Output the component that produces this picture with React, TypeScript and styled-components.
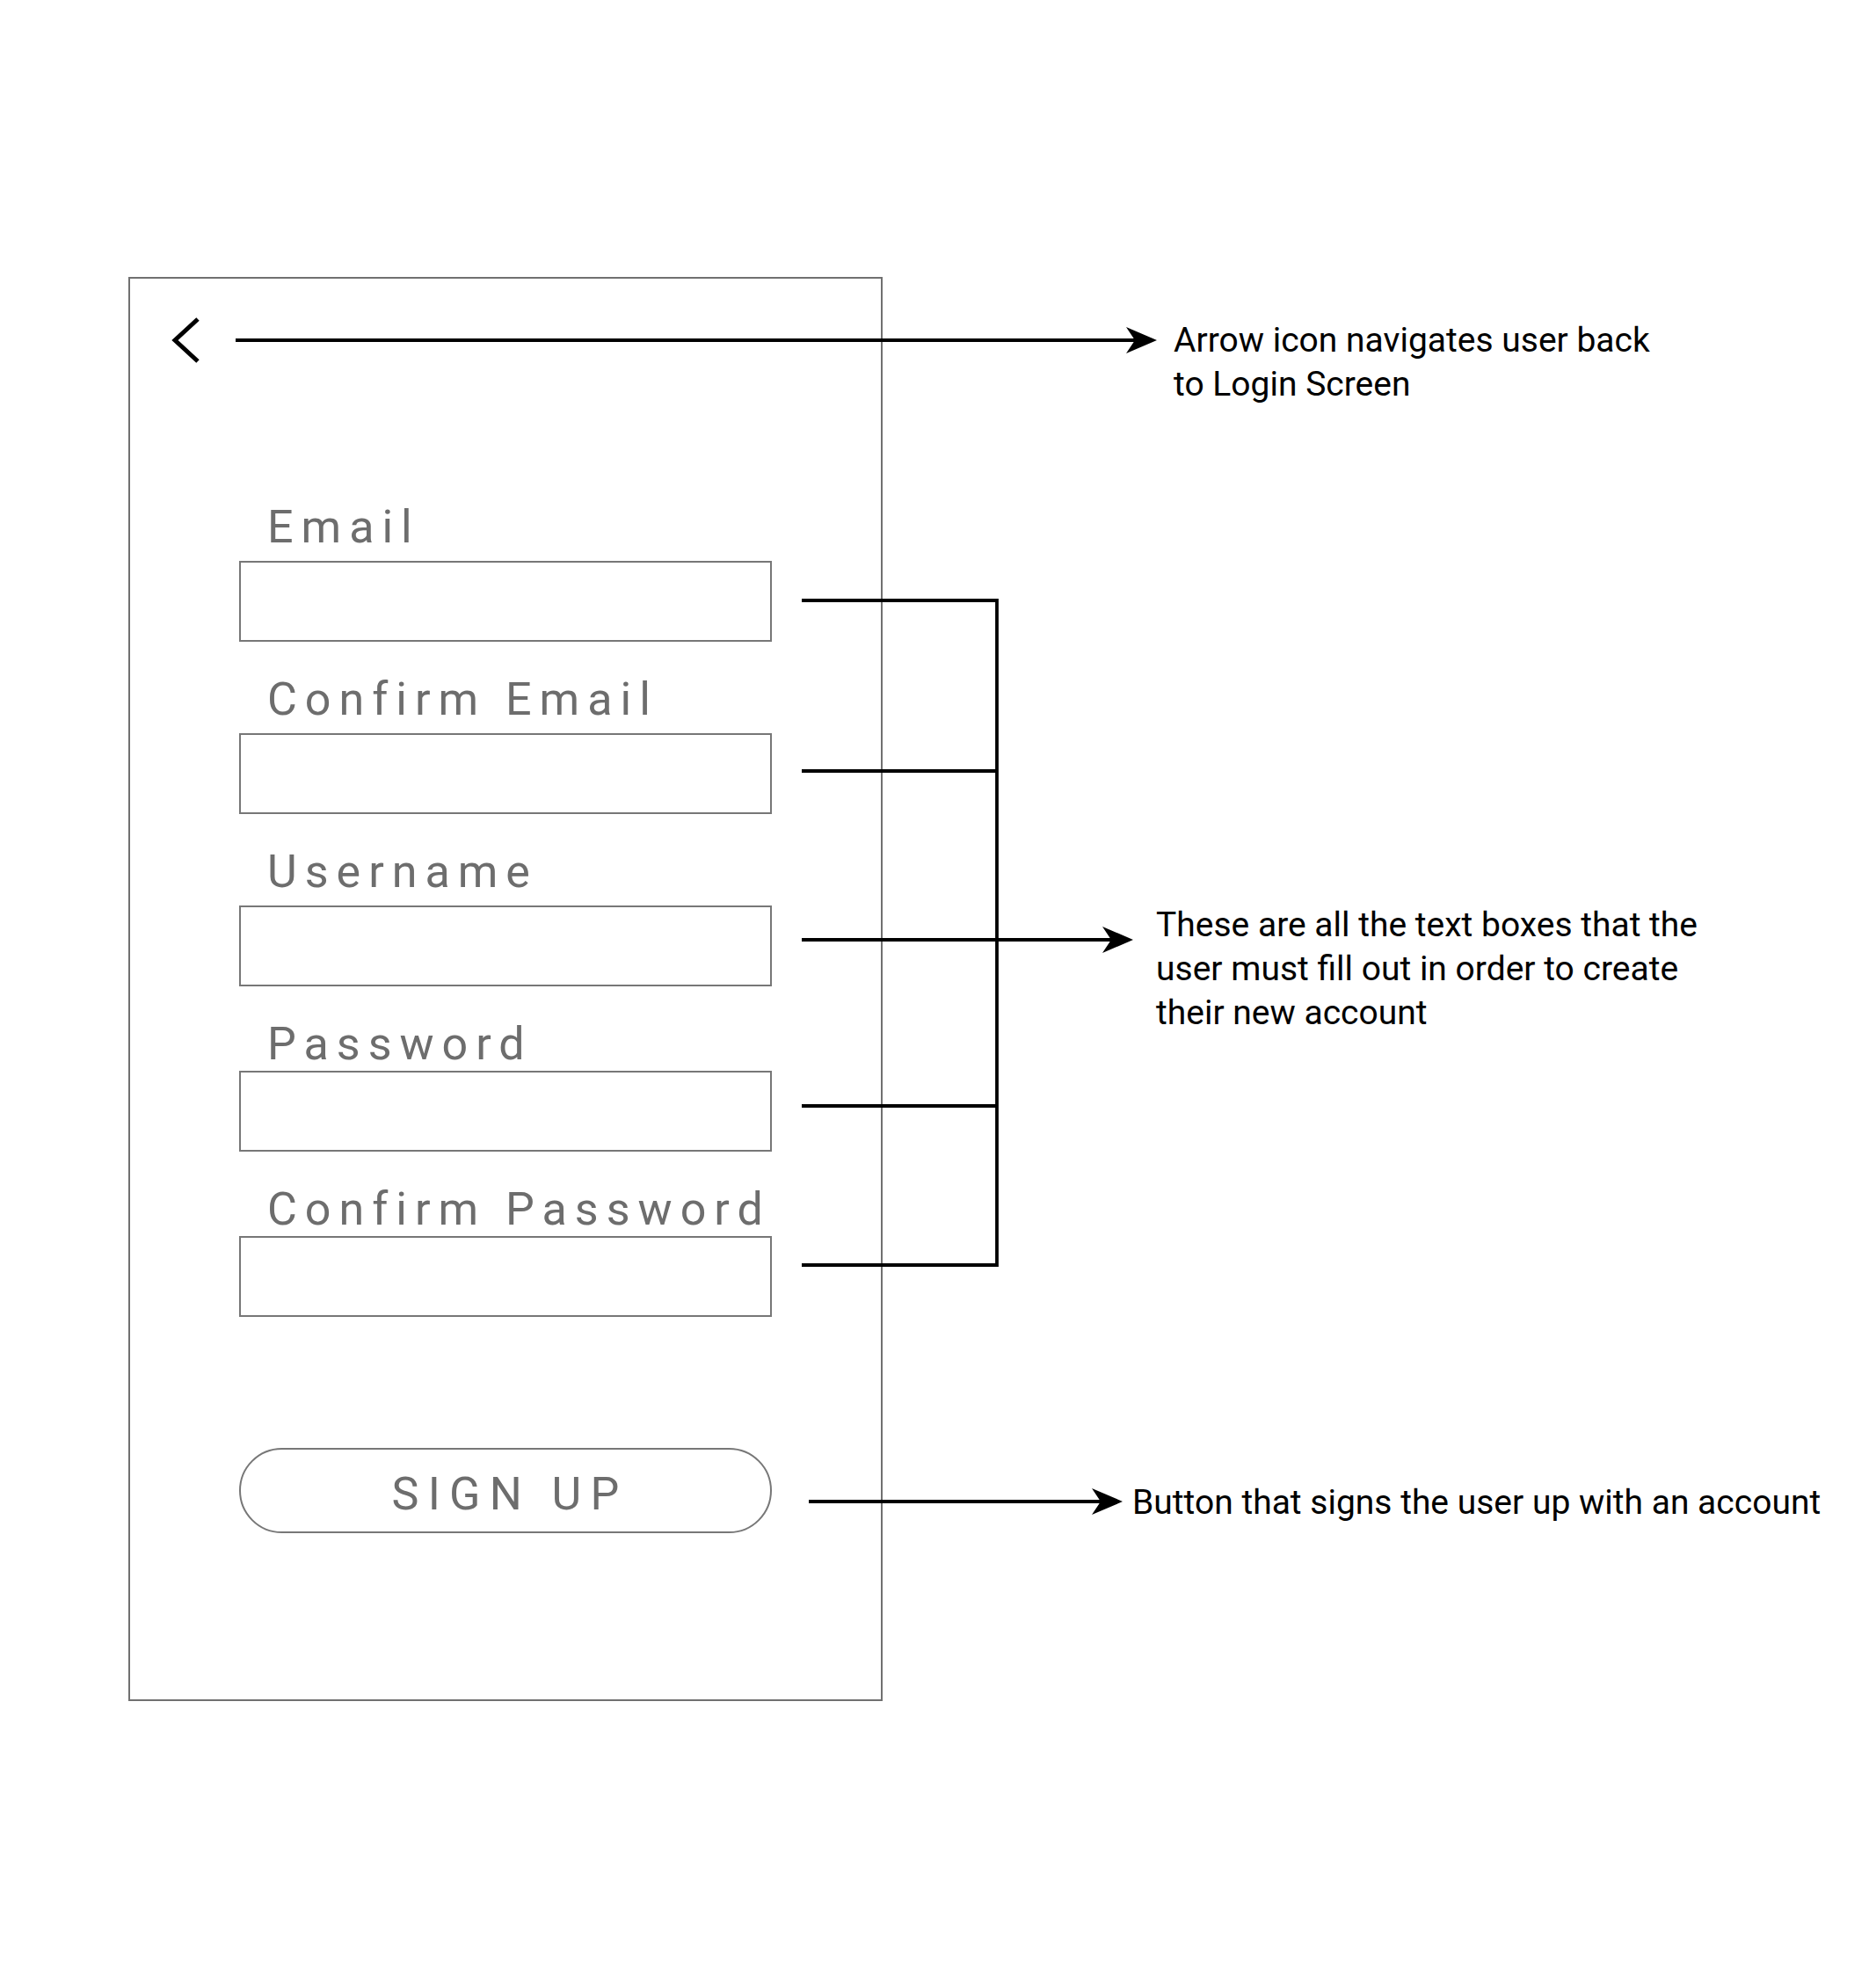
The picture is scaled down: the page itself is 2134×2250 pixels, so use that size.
import React from "react";
import styled, { createGlobalStyle } from "styled-components";

const GlobalStyle = createGlobalStyle`
  html, body {
    margin: 0;
    padding: 0;
    background: #ffffff;
  }

  * {
    box-sizing: border-box;
  }
`;

const fields = [
  { label: "Email", compact: false },
  { label: "Confirm Email", compact: false },
  { label: "Username", compact: false },
  { label: "Password", compact: true },
  { label: "Confirm Password", compact: true },
];

const notes = [
  {
    lines: ["Arrow icon navigates user back", "to Login Screen"],
    top: 47,
    indent: 331,
  },
  {
    lines: [
      "These are all the text boxes that the",
      "user must fill out in order to create",
      "their new account",
    ],
    top: 565,
    indent: 311,
  },
  {
    lines: ["Button that signs the user up with an account"],
    top: 507,
    indent: 284,
  },
];

const bracketRows = [683, 877, 1069, 1258, 1439];

// arrow head pointing right, tip at (x, y)
const head = (x: number, y: number) =>
  `${x},${y} ${x - 35},${y - 15} ${x - 25},${y} ${x - 35},${y + 15}`;

const App: React.FC = () => {
  return (
    <Page>
      <GlobalStyle />
      <Row>
        <Phone>
          <BackButton aria-label="Back">
            <svg width="34" height="54" viewBox="0 0 34 54">
              <polyline
                points="31,3 5,27 31,51"
                fill="none"
                stroke="#000"
                strokeWidth="5"
              />
            </svg>
          </BackButton>

          <Form>
            <FieldList>
              {fields.map((f) => (
                <Field key={f.label}>
                  <Label $compact={f.compact}>{f.label}</Label>
                  <Input type="text" />
                </Field>
              ))}
            </FieldList>
            <SignUp type="button">SIGN UP</SignUp>
          </Form>
        </Phone>

        <Notes>
          {notes.map((n, i) => (
            <Note key={i} $top={n.top} $indent={n.indent}>
              {n.lines.map((l) => (
                <span key={l}>{l}</span>
              ))}
            </Note>
          ))}
        </Notes>
      </Row>

      <Connectors width="2134" height="2250" viewBox="0 0 2134 2250">
        <g stroke="#000" strokeWidth="3.8" fill="none">
          <line x1="268" y1="387" x2="1294" y2="387" />
          {bracketRows.map((y) => (
            <line key={y} x1="912" y1={y} x2="1134" y2={y} />
          ))}
          <line x1="1134" y1="681.1" x2="1134" y2="1440.9" />
          <line x1="1134" y1="1069" x2="1268" y2="1069" />
          <line x1="920" y1="1708" x2="1254" y2="1708" />
        </g>
        <g fill="#000">
          <polygon points={head(1316, 387)} />
          <polygon points={head(1289, 1069)} />
          <polygon points={head(1277, 1708)} />
        </g>
      </Connectors>
    </Page>
  );
};

export default App;

const Page = styled.div`
  position: relative;
  width: 2134px;
  height: 2250px;
  background: #ffffff;
  overflow: hidden;
`;

const Row = styled.div`
  display: flex;
  align-items: flex-start;
  padding: 315px 0 0 146px;
`;

const Phone = styled.div`
  display: flex;
  flex-direction: column;
  width: 858px;
  height: 1620px;
  border: 2px solid #707070;
`;

const BackButton = styled.button`
  display: block;
  width: 34px;
  height: 54px;
  margin: 43px 0 0 46px;
  padding: 0;
  border: none;
  background: none;

  svg {
    display: block;
  }
`;

const Form = styled.div`
  display: flex;
  flex-direction: column;
  width: 606px;
  margin: 156px 0 0 124px;
`;

const FieldList = styled.div`
  display: flex;
  flex-direction: column;
  gap: 36px;
`;

const Field = styled.div`
  display: flex;
  flex-direction: column;
`;

const Label = styled.div<{ $compact: boolean }>`
  height: 60px;
  margin-bottom: ${(p) => (p.$compact ? 0 : 8)}px;
  padding-left: 32px;
  font-family: Roboto, "Open Sans", sans-serif;
  font-size: 52px;
  line-height: 60px;
  letter-spacing: 9px;
  color: #6d6d6d;
  white-space: nowrap;
`;

const Input = styled.input`
  display: block;
  width: 606px;
  height: 92px;
  margin: 0;
  border: 2px solid #777777;
  border-radius: 0;
  background: #ffffff;
  outline: none;
`;

const SignUp = styled.button`
  display: flex;
  align-items: center;
  justify-content: center;
  width: 606px;
  height: 97px;
  margin-top: 149px;
  padding: 8px 0 0 10px;
  border: 2px solid #777777;
  border-radius: 49px;
  background: #ffffff;
  font-family: Roboto, "Open Sans", sans-serif;
  font-size: 52px;
  line-height: 60px;
  letter-spacing: 10.3px;
  color: #6d6d6d;
`;

const Notes = styled.div`
  display: flex;
  flex-direction: column;
`;

const Note = styled.p<{ $top: number; $indent: number }>`
  display: flex;
  flex-direction: column;
  margin: ${(p) => p.$top}px 0 0 ${(p) => p.$indent}px;
  font-family: Roboto, "Open Sans", sans-serif;
  font-size: 39px;
  line-height: 50px;
  color: #000000;
  white-space: nowrap;
`;

const Connectors = styled.svg`
  position: absolute;
  top: 0;
  left: 0;
  pointer-events: none;
`;
